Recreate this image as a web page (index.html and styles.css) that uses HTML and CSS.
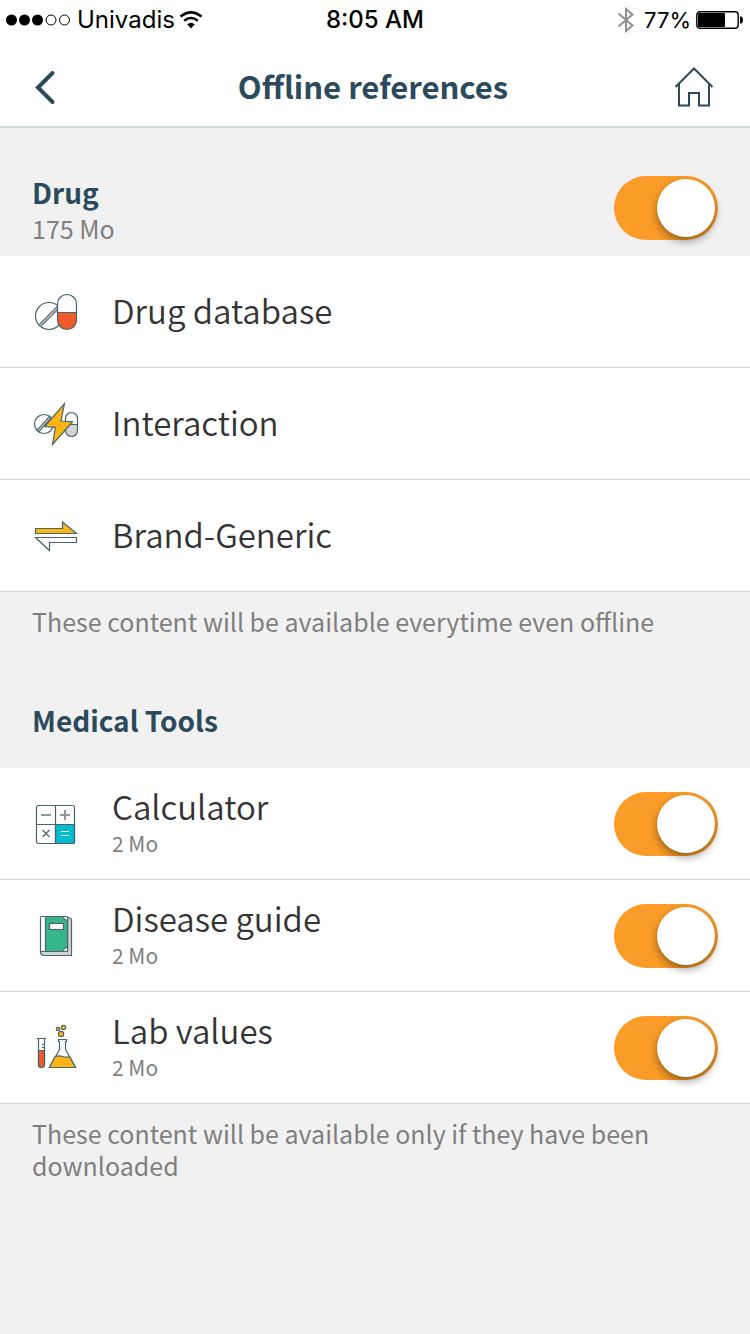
FILE: index.html
```html
<!DOCTYPE html>
<html lang="en">
<head>
  <meta charset="UTF-8">
  <meta name="viewport" content="width=device-width, initial-scale=1.0">
  <title>Offline references</title>
  <link rel="stylesheet" href="styles.css">
</head>
<body>
  <div class="status-bar">
    <div class="status-left">
      <svg class="signal" width="66" height="12" viewBox="0 0 66 12" aria-hidden="true">
        <circle cx="5.5" cy="6" r="5.5"/>
        <circle cx="18.5" cy="6" r="5.5"/>
        <circle cx="31.5" cy="6" r="5.5"/>
        <circle class="empty" cx="45" cy="6" r="5"/>
        <circle class="empty" cx="58.5" cy="6" r="5"/>
      </svg>
      <span>Univadis</span>
      <svg class="wifi" width="22" height="18" viewBox="0 0 22 18" aria-hidden="true">
        <path class="arc" d="M.5 5.6Q11-2.8 21.5 5.6M4.2 9.8Q11 4.2 17.8 9.8"/>
        <path d="M7.2 13.2Q11 10.2 14.8 13.2L11 17.5z"/>
      </svg>
    </div>
    <div class="status-time">8:05 AM</div>
    <div class="status-right">
      <svg class="bluetooth" width="18" height="26" viewBox="0 0 18 26" aria-hidden="true">
        <path d="M1.5 6.5L15.5 18.5L9 24V2L15.5 7.5L1.5 19.5"/>
      </svg>
      <span>77%</span>
      <svg width="48" height="18" viewBox="0 0 48 18" aria-hidden="true">
        <rect class="battery-case" x=".8" y=".8" width="41.4" height="16.4" rx="3"/>
        <rect x="2" y="2" width="27" height="14" rx="1"/>
        <path d="M44 5.5h1.5q1.5 1 1.5 3.5t-1.5 3.5H44z"/>
      </svg>
    </div>
  </div>

  <header class="nav-bar">
    <button class="nav-button" type="button" aria-label="Back">
      <svg width="26" height="40" viewBox="0 0 26 40">
        <path class="chevron" d="M20.5 7L6 21.5L20.5 36"/>
      </svg>
    </button>
    <h1>Offline references</h1>
    <a class="nav-button" href="#" aria-label="Home">
      <svg width="40" height="42" viewBox="0 0 40 42">
        <path class="home" d="M1.5 22L20 3.5L38.5 22M5 19V40.500H15V28H25V40.500H35V19"/>
      </svg>
    </a>
  </header>

  <main>
    <section>
      <div class="section-header">
        <label for="drug">
          <h2>Drug</h2>
          <span class="section-size">175 Mo</span>
        </label>
        <input class="switch" type="checkbox" id="drug" checked>
      </div>
      <ul class="list">
        <li class="row">
          <svg class="icon" viewBox="0 0 48 48" aria-hidden="true">
            <circle class="white" cx="17" cy="28" r="13.5"/>
            <path class="groove" d="M8 37.5L26 19.5"/>
            <path d="M7.2 36.7L25.2 18.7M8.8 38.3L26.8 20.3"/>
            <path class="white" d="M25.5 24.5V16a9.5 9.5 0 0 1 19 0v8.5z"/>
            <path class="red" d="M25.5 24.5V32a9.5 9.5 0 0 0 19 0V24.5z"/>
          </svg>
          <span class="name">Drug database</span>
        </li>
        <li class="row">
          <svg class="icon" viewBox="0 0 48 48" aria-hidden="true">
            <circle class="white" cx="12" cy="24" r="9.5"/>
            <path d="M5 30.5L18 16M6.5 32L19 18"/>
            <path class="white" d="M33.5 24.5V18.5a6 6 0 0 1 12 0v6z"/>
            <path class="grey" d="M33.5 24.5V30.5a6 6 0 0 0 12 0V24.5z"/>
            <path class="yellow" d="M32.5 3.5L29 21L40.5 21.7L20.5 44.5L23.3 27.3L12.7 26.5z"/>
          </svg>
          <span class="name">Interaction</span>
        </li>
        <li class="row">
          <svg class="icon" viewBox="0 0 48 48" aria-hidden="true">
            <path class="yellow" d="M3.5 16.5H30.5V10L44.5 21.5H3.5z"/>
            <path class="white" d="M3.5 25.5H44.5V30.5H17.5V38.5z"/>
          </svg>
          <span class="name">Brand-Generic</span>
        </li>
      </ul>
      <p class="note">These content will be available everytime even offline</p>
    </section>

    <section>
      <div class="section-header tools-header">
        <h2>Medical Tools</h2>
      </div>
      <ul class="list">
        <li class="row">
          <svg class="icon" viewBox="0 0 48 48" aria-hidden="true">
            <rect class="white" x="4.5" y="5.5" width="38" height="38" rx="2"/>
            <path class="cyan" d="M23.5 24.5h19V41.5a2 2 0 0 1-2 2h-17z"/>
            <path d="M23.5 5.5v38M4.5 24.5h38"/>
            <path class="sign" d="M9 15h10M28 15h10M33 10v10"/>
            <path d="M10.5 30l7 7M17.5 30l-7 7"/>
            <path class="equals" d="M29 31.5h8M29 35.5h8"/>
          </svg>
          <label class="text" for="calculator">
            <span class="name">Calculator</span>
            <span class="size">2 Mo</span>
          </label>
          <input class="switch" type="checkbox" id="calculator" checked>
        </li>
        <li class="row">
          <svg class="icon" viewBox="0 0 48 48" aria-hidden="true">
            <path class="grey" d="M8.5 39.5q0 4 4 4H39.5V8.5q0-3-4-3v34z"/>
            <rect class="white" x="8.5" y="4.5" width="27" height="35" rx="1"/>
            <path class="green" d="M13.5 4.5H31.5q0 4 4 4V35.5q-4 0-4 4H13.5z"/>
            <rect class="white" x="17.5" y="11.5" width="14" height="6"/>
          </svg>
          <label class="text" for="disease">
            <span class="name">Disease guide</span>
            <span class="size">2 Mo</span>
          </label>
          <input class="switch" type="checkbox" id="disease" checked>
        </li>
        <li class="row">
          <svg class="icon" viewBox="0 0 48 48" aria-hidden="true">
            <path class="white" d="M5 14.5h9M6.5 14.5V40.5a3 3 0 0 0 6 0V14.5"/>
            <path class="red" d="M6.5 26.5V40.5a3 3 0 0 0 6 0V26.5z"/>
            <path d="M10 20.5h2.5M10 23.5h2.5M10 26.5h2.5M10 29.5h2.5"/>
            <path class="white" d="M26.5 18V15.5H34.5V18M27.5 17V25.5L17.5 43.5H43.5L33.5 25.5V17"/>
            <path class="yellow" d="M23.2 32.5q4-1.2 7.3 0t7 0L43.5 43.5H17.5z"/>
            <circle class="yellow" cx="26" cy="5" r="1.7"/>
            <circle class="yellow" cx="31.5" cy="3.5" r="2.2"/>
            <circle class="yellow" cx="29" cy="10" r="2.7"/>
          </svg>
          <label class="text" for="lab">
            <span class="name">Lab values</span>
            <span class="size">2 Mo</span>
          </label>
          <input class="switch" type="checkbox" id="lab" checked>
        </li>
      </ul>
      <p class="note">These content will be available only if they have been downloaded</p>
    </section>
  </main>
</body>
</html>
```
FILE: styles.css
```css
* {
  box-sizing: border-box;
  margin: 0;
  padding: 0;
}
body {
  background-color: #f1f1f1;
  color: #333;
  font-family: "Noto Sans CJK SC", "Noto Sans", sans-serif;
}
svg {
  display: block;
  flex-shrink: 0;
}

/* Status bar */
.status-bar {
  display: grid;
  grid-template-columns: 1fr auto 1fr;
  align-items: center;
  height: 40px;
  padding: 0 6px;
  background: white;
  color: #000;
  font-family: Inter, "Liberation Sans", sans-serif;
  font-size: 24px;
  line-height: 40px;
}
.status-left, .status-right {
  display: flex;
  align-items: center;
  gap: 5px;
}
.status-right {
  justify-content: flex-end;
  font-size: 22px;
}
.status-time {
  font-weight: 500;
}
.signal .empty {
  fill: none;
  stroke: #000;
}
.wifi .arc {
  fill: none;
  stroke: #000;
  stroke-width: 2.6;
}
.bluetooth {
  margin-right: 4px;
  fill: none;
  stroke: #8e8e8e;
  stroke-width: 2;
}
.battery-case {
  fill: none;
  stroke: #000;
  stroke-width: 1.4;
}

/* Navigation */
.nav-bar {
  display: flex;
  align-items: center;
  justify-content: space-between;
  height: 88px;
  padding: 6px 36px 0 32px;
  background: white;
  border-bottom: 2px solid #cfd8da;
}
.nav-bar h1 {
  flex: 1;
  color: #2b4a5b;
  font-size: 31px;
  font-weight: 700;
  line-height: 40px;
  text-align: center;
}
.nav-button {
  display: flex;
  width: 44px;
  background: none;
  border: none;
  cursor: pointer;
}
a.nav-button {
  justify-content: flex-end;
}
.chevron, .home {
  fill: none;
  stroke: #2b4a5b;
}
.chevron {
  stroke-width: 4;
  stroke-linecap: round;
}
.home {
  stroke-width: 2;
}

/* Sections */
.section-header {
  display: flex;
  align-items: center;
  justify-content: space-between;
  height: 128px;
  padding: 32px 32px 0;
}
.section-header h2 {
  color: #2b4a5b;
  font-size: 28px;
  font-weight: 700;
  line-height: 40px;
}
.section-size {
  display: block;
  color: #7f7f7f;
  font-size: 25px;
  line-height: 32px;
}
.tools-header {
  height: 112px;
  padding-top: 16px;
}
.list {
  list-style: none;
  background: white;
}
.row {
  display: flex;
  align-items: center;
  height: 112px;
  padding: 0 32px;
  border-bottom: 1px solid #d3d3d3;
}
.text {
  flex: 1;
  padding-bottom: 6px;
}
.name, .size {
  display: block;
}
.name {
  padding-bottom: 4px;
  font-size: 33px;
  font-weight: 350;
  line-height: 40px;
}
.size {
  color: #7f7f7f;
  font-size: 21px;
  line-height: 26px;
}
.note {
  padding: 13px 32px 19px;
  color: #7f7f7f;
  font-size: 25px;
  line-height: 32px;
}

/* Icons */
.icon {
  width: 48px;
  height: 48px;
  margin-right: 32px;
  fill: none;
  stroke: #49646a;
  stroke-width: 1.2;
}
.white { fill: white; }
.red { fill: #f15a29; }
.yellow { fill: #fdb515; }
.grey { fill: #d0d2d3; }
.green { fill: #38b68b; }
.cyan { fill: #00bcd0; }
.groove {
  stroke: #d0d2d3;
  stroke-width: 2;
}
.sign {
  stroke: #8b9ca1;
  stroke-width: 2;
}
.equals {
  stroke: white;
}

/* Switch */
.switch {
  appearance: none;
  flex-shrink: 0;
  width: 104px;
  height: 64px;
  padding: 3px;
  border-radius: 32px;
  background: #ccc;
  cursor: pointer;
}
.switch::before {
  content: "";
  display: block;
  width: 58px;
  height: 58px;
  border-radius: 50%;
  background: white;
  box-shadow: 0 4px 8px rgba(0,0,0,0.4);
}
.switch:checked {
  background: #fa9c27;
}
.switch:checked::before {
  margin-left: auto;
}
```
